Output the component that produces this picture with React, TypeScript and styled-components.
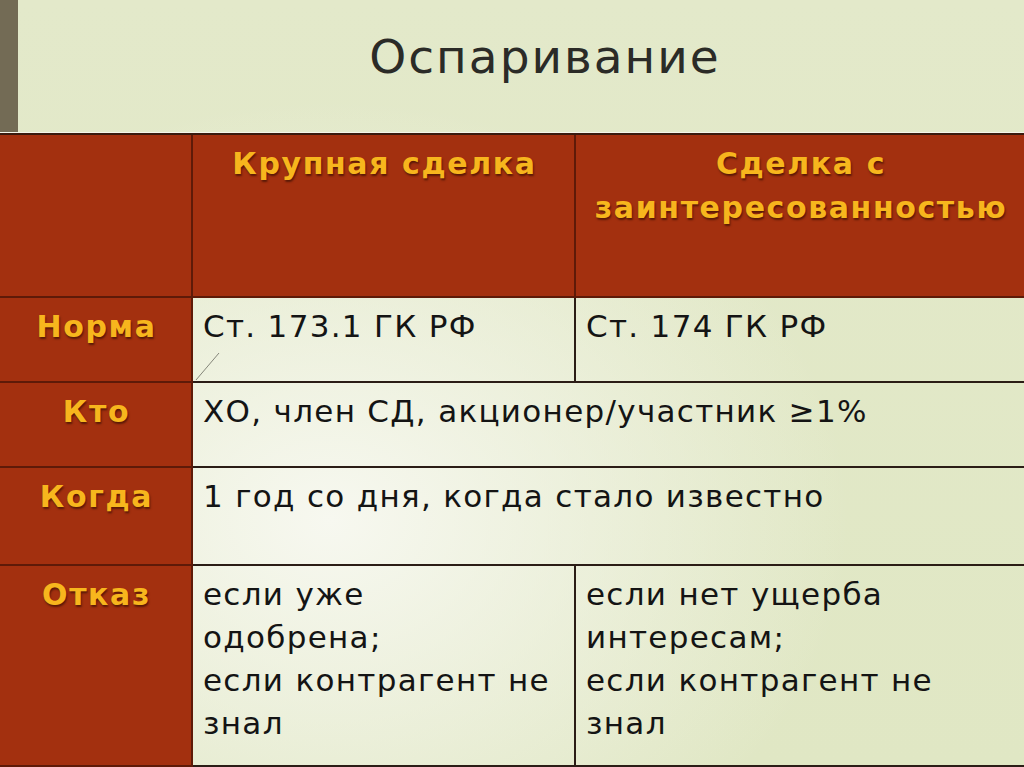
import React from "react";
import styled, { createGlobalStyle } from "styled-components";

/* Global */
/* ************************************************************************** */
const GlobalStyle = createGlobalStyle`
  html, body {
    margin: 0;
    padding: 0;
    background: #e2e8c8;
  }
`;

const FONT = `"DejaVu Sans", "Liberation Sans", sans-serif`;

/* Styled Components */
/* ************************************************************************** */
const Slide = styled.div`
  width: 1024px;
  height: 767px;
  overflow: hidden;
  display: flex;
  flex-direction: column;
  font-family: ${FONT};
  background:
    radial-gradient(ellipse 520px 420px at 330px 520px, #f7f8f0 0%, rgba(247, 248, 240, 0) 100%),
    linear-gradient(180deg, #e3e9ca 0%, #e0e7c4 100%);
`;

const TitleBar = styled.header`
  flex: none;
  height: 132px;
  display: flex;
  border-bottom: 1px solid #f4f6ea;
`;

const Accent = styled.div`
  flex: none;
  width: 18px;
  background: #736b55;
`;

const Title = styled.h1`
  flex: 1;
  margin: 0;
  padding: 29px 0 0 48px;
  text-align: center;
  font-family: ${FONT};
  font-size: 47px;
  font-weight: 400;
  letter-spacing: 2px;
  color: #2b2b27;
`;

const Grid = styled.div`
  flex: 1;
  display: grid;
  grid-template-columns: 193px 383px 1fr;
  grid-template-rows: 163px 85px 85px 98px 1fr;
  border-top: 2px solid #3a1a0e;
`;

const Cell = styled.div<{ $head?: boolean; $span?: number; $last?: boolean }>`
  position: relative;
  grid-column: ${(p) => (p.$span ? `span ${p.$span}` : "auto")};
  box-sizing: border-box;
  padding: 7px 8px 0 10px;
  line-height: 43px;
  border-right: ${(p) => (p.$last ? "none" : "2px solid #2b1d16")};
  border-bottom: 2px solid #2b1d16;
  background: ${(p) => (p.$head ? "#a3300f" : "transparent")};
  ${(p) => (p.$head ? "border-color: #5e1a08;" : "")}
`;

const HeadText = styled.div`
  text-align: center;
  font-size: 30px;
  font-weight: 700;
  line-height: 44px;
  letter-spacing: 1.6px;
  color: #f7b61d;
  text-shadow: 1px 2px 2px rgba(40, 10, 0, 0.6);
  white-space: nowrap;
`;

const BodyText = styled.div`
  font-size: 31px;
  letter-spacing: 1.3px;
  color: #141414;
  white-space: nowrap;
`;

const Stroke = styled.svg`
  position: absolute;
  left: 2px;
  bottom: 0;
  width: 26px;
  height: 30px;
`;

/* Data */
/* ************************************************************************** */
const rows: { label: string; text: string }[] = [
  { label: "Кто", text: "ХО, член СД, акционер/участник ≥1%" },
  { label: "Когда", text: "1 год со дня, когда стало известно" },
];

export default function App() {
  return (
    <>
      <GlobalStyle />
      <Slide>
        <TitleBar>
          <Accent />
          <Title>Оспаривание</Title>
        </TitleBar>
        <Grid>
          <Cell $head />
          <Cell $head>
            <HeadText>Крупная сделка</HeadText>
          </Cell>
          <Cell $head $last>
            <HeadText>
              Сделка с<br />
              заинтересованностью
            </HeadText>
          </Cell>

          <Cell $head>
            <HeadText>Норма</HeadText>
          </Cell>
          <Cell>
            <BodyText>Ст. 173.1 ГК РФ</BodyText>
            <Stroke viewBox="0 0 26 30">
              <line x1="1" y1="29" x2="24" y2="2" stroke="#6a6a60" strokeWidth="0.8" />
            </Stroke>
          </Cell>
          <Cell $last>
            <BodyText>Ст. 174 ГК РФ</BodyText>
          </Cell>

          {rows.map((r) => (
            <React.Fragment key={r.label}>
              <Cell $head>
                <HeadText>{r.label}</HeadText>
              </Cell>
              <Cell $span={2} $last>
                <BodyText>{r.text}</BodyText>
              </Cell>
            </React.Fragment>
          ))}

          <Cell $head>
            <HeadText>Отказ</HeadText>
          </Cell>
          <Cell>
            <BodyText>
              если уже
              <br />
              одобрена;
              <br />
              если контрагент не
              <br />
              знал
            </BodyText>
          </Cell>
          <Cell $last>
            <BodyText>
              если нет ущерба
              <br />
              интересам;
              <br />
              если контрагент не
              <br />
              знал
            </BodyText>
          </Cell>
        </Grid>
      </Slide>
    </>
  );
}
